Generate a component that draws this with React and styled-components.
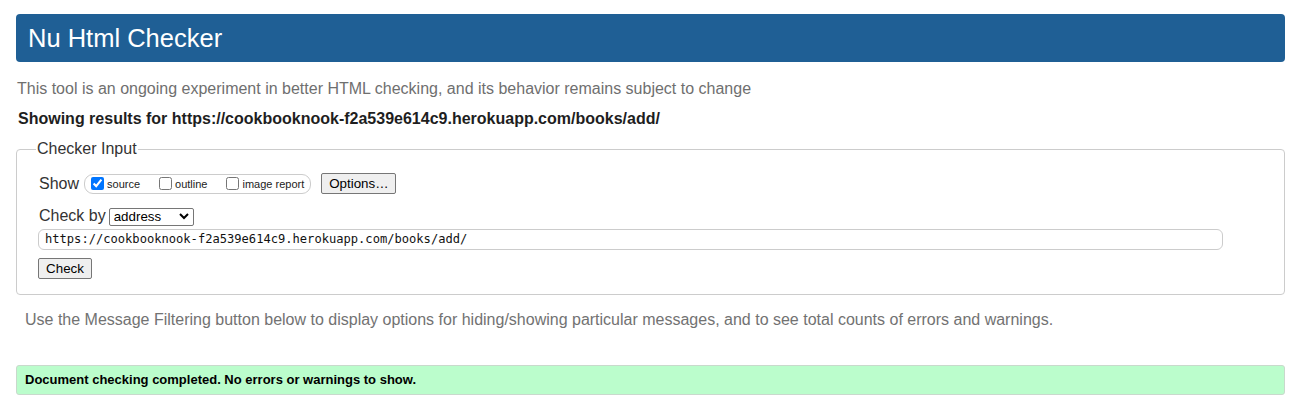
import styled, { createGlobalStyle } from "styled-components";

const GlobalStyle = createGlobalStyle`
  body {
    margin: 0;
    background: #fff;
    font-family: "Liberation Sans", Arial, sans-serif;
  }
`;

const Page = styled.div`
  padding: 14px 6px 8px 16px;
`;

const Header = styled.h1`
  margin: 0;
  height: 48px;
  padding-left: 12px;
  background: #1f5f95;
  border-radius: 4px;
  color: #fff;
  font-size: 25.5px;
  font-weight: normal;
  line-height: 48px;
`;

const Intro = styled.p`
  margin: 18px 0 0 1px;
  color: #6f6f6f;
  font-size: 16px;
  line-height: 18px;
`;

const Results = styled.p`
  margin: 12px 0 0 2px;
  color: #1e1e1e;
  font-size: 16px;
  font-weight: bold;
  line-height: 18px;
`;

const Fieldset = styled.fieldset`
  margin: 12px 0 0;
  padding: 15px 22px 15px;
  border: 1px solid #ccc;
  border-radius: 4px;
`;

const Legend = styled.legend`
  margin-left: -3px;
  padding: 0 1px;
  color: #333;
  font-size: 16px;
  line-height: 18px;
`;

const Row = styled.div`
  display: flex;
  align-items: center;
  gap: ${(p) => p.$gap || 4}px;
  margin-top: ${(p) => p.$top || 0}px;
`;

const Label = styled.span`
  color: #333;
  font-size: 16px;
  line-height: 18px;
`;

const ShowGroup = styled.div`
  display: flex;
  align-items: center;
  height: 18px;
  padding: 0 6px;
  border: 1px solid #ccc;
  border-radius: 9px;
`;

const Option = styled.label`
  display: flex;
  align-items: center;
  gap: 3px;
  margin-right: ${(p) => (p.$last ? 0 : 19)}px;
  color: #222;
  font-size: 11px;
`;

const Box = styled.input`
  width: 13px;
  height: 13px;
  margin: 0;
`;

const Button = styled.button`
  height: 21px;
  padding: 0 7px;
  border: 1px solid #767676;
  border-radius: 2px;
  background: #efefef;
  color: #000;
  font-family: "Liberation Sans", Arial, sans-serif;
  font-size: 13.33px;
`;

const OptionsButton = styled(Button)`
  margin-left: 5px;
  width: 75px;
`;

const SelectWrap = styled.span`
  position: relative;
  display: inline-block;
`;

const Select = styled.select`
  appearance: none;
  width: 85px;
  height: 18px;
  padding: 0 0 0 4px;
  border: 1px solid #767676;
  border-radius: 2px;
  background: #fff;
  color: #000;
  font-family: "Liberation Sans", Arial, sans-serif;
  font-size: 13.33px;
`;

const Chevron = styled.svg`
  position: absolute;
  right: 5px;
  top: 6px;
  pointer-events: none;
`;

const UrlInput = styled.input`
  box-sizing: border-box;
  display: block;
  width: 1185px;
  height: 21px;
  margin: 3px 0 0 -1px;
  padding: 0 6px;
  border: 1px solid #ccc;
  border-radius: 6px;
  color: #111;
  font-family: "DejaVu Sans Mono", "Liberation Mono", monospace;
  font-size: 12.1px;
`;

const CheckButton = styled(Button)`
  display: block;
  margin: 8px 0 0 -1px;
  width: 54px;
`;

const Note = styled.p`
  margin: 16px 0 0 9px;
  color: #727272;
  font-size: 16px;
  line-height: 18px;
`;

const Success = styled.div`
  box-sizing: border-box;
  margin-top: 36px;
  height: 30px;
  padding-left: 8px;
  border: 1px solid #c9d9cc;
  border-radius: 3px;
  background: #bbfdcc;
  color: #000;
  font-size: 13px;
  font-weight: bold;
  line-height: 28px;
`;

export default function App() {
  const url = "https://cookbooknook-f2a539e614c9.herokuapp.com/books/add/";
  return (
    <Page>
      <GlobalStyle />
      <Header>Nu Html Checker</Header>
      <Intro>
        This tool is an ongoing experiment in better HTML checking, and its behavior remains subject to change
      </Intro>
      <Results>Showing results for {url}</Results>
      <Fieldset>
        <Legend>Checker Input</Legend>
        <Row $gap={5}>
          <Label>Show</Label>
          <ShowGroup>
            <Option>
              <Box type="checkbox" defaultChecked />
              source
            </Option>
            <Option>
              <Box type="checkbox" />
              outline
            </Option>
            <Option $last>
              <Box type="checkbox" />
              image report
            </Option>
          </ShowGroup>
          <OptionsButton>Options…</OptionsButton>
        </Row>
        <Row $top={13} $gap={3}>
          <Label>Check by</Label>
          <SelectWrap>
            <Select defaultValue="address">
              <option value="address">address</option>
            </Select>
            <Chevron width="10" height="7" viewBox="0 0 10 7">
              <polyline points="1,1 5,5 9,1" fill="none" stroke="#000" strokeWidth="2" />
            </Chevron>
          </SelectWrap>
        </Row>
        <UrlInput defaultValue={url} />
        <CheckButton>Check</CheckButton>
      </Fieldset>
      <Note>
        Use the Message Filtering button below to display options for hiding/showing particular messages, and to see total counts of errors and warnings.
      </Note>
      <Success>Document checking completed. No errors or warnings to show.</Success>
    </Page>
  );
}
